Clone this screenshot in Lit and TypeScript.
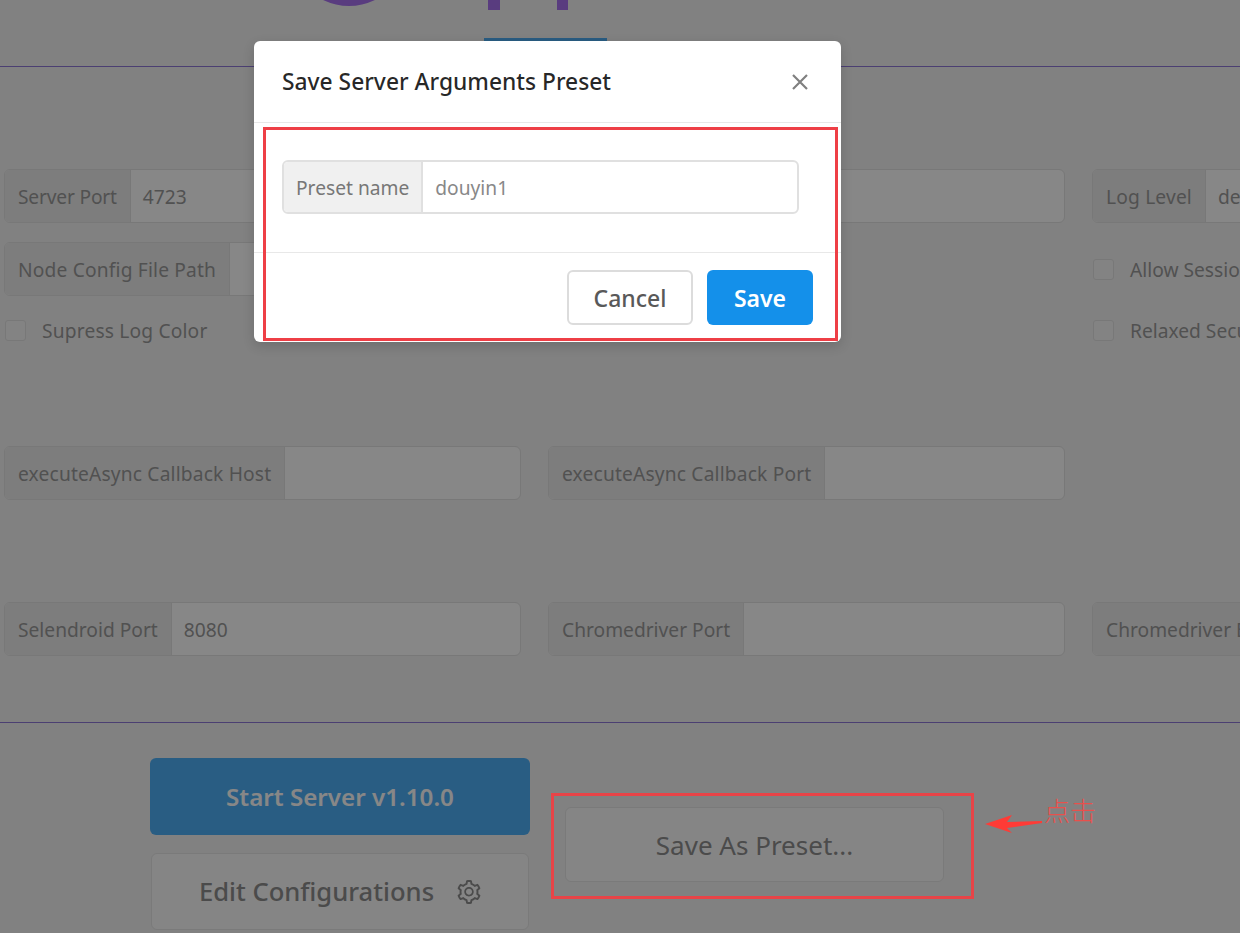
import { LitElement, html, css, nothing } from "lit";
import { customElement } from "lit/decorators.js";

const GEAR =
  "M924.8 625.7l-65.5-56c3.1-19 4.7-38.4 4.7-57.8s-1.6-38.8-4.7-57.8l65.5-56a32.03 32.03 0 0 0 9.3-35.2l-.9-2.6a443.74 443.74 0 0 0-79.7-137.9l-1.8-2.1a32.12 32.12 0 0 0-35.1-9.5l-81.3 28.9c-30-24.6-63.5-44-99.7-57.6l-15.7-85a32.05 32.05 0 0 0-25.8-25.7l-2.7-.5c-52.1-9.4-106.9-9.4-159 0l-2.7.5a32.05 32.05 0 0 0-25.8 25.7l-15.8 85.4a351.86 351.86 0 0 0-99 57.4l-81.9-29.1a32 32 0 0 0-35.1 9.5l-1.8 2.1a446.02 446.02 0 0 0-79.7 137.9l-.9 2.6c-4.5 12.5-.8 26.5 9.3 35.2l66.3 56.6c-3.1 18.8-4.6 38-4.6 57.1 0 19.2 1.5 38.4 4.6 57.1L99 625.5a32.03 32.03 0 0 0-9.3 35.2l.9 2.6c18.1 50.4 44.9 96.9 79.7 137.9l1.8 2.1a32.12 32.12 0 0 0 35.1 9.5l81.9-29.1c29.8 24.5 63.1 43.9 99 57.4l15.8 85.4a32.05 32.05 0 0 0 25.8 25.7l2.7.5a449.4 449.4 0 0 0 159 0l2.7-.5a32.05 32.05 0 0 0 25.8-25.7l15.7-85a350 350 0 0 0 99.7-57.6l81.3 28.9a32 32 0 0 0 35.1-9.5l1.8-2.1c34.8-41.1 61.6-87.5 79.7-137.9l.9-2.6c4.5-12.3.8-26.3-9.3-35zM788.3 465.9c2.5 15.1 3.8 30.6 3.8 46.1s-1.3 31-3.8 46.1l-6.6 40.1 74.7 63.9a370.03 370.03 0 0 1-42.6 73.6L721 702.8l-31.4 25.8c-23.9 19.6-50.5 35-79.3 45.8l-38.1 14.3-17.9 97a377.5 377.5 0 0 1-85 0l-17.9-97.2-37.8-14.5c-28.5-10.8-55-26.2-78.7-45.7l-31.4-25.9-93.4 33.2c-17-22.9-31.2-47.6-42.6-73.6l75.5-64.5-6.5-40c-2.4-14.9-3.7-30.3-3.7-45.5 0-15.3 1.2-30.6 3.7-45.5l6.5-40-75.5-64.5c11.3-26.1 25.6-50.7 42.6-73.6l93.4 33.2 31.4-25.9c23.7-19.5 50.2-34.9 78.7-45.7l37.9-14.3 17.9-97.2c28.1-3.2 56.8-3.2 85 0l17.9 97 38.1 14.3c28.7 10.8 55.4 26.2 79.3 45.8l31.4 25.8 92.8-32.9c17 22.9 31.2 47.6 42.6 73.6L781.8 426l6.5 39.9zM512 326c-97.2 0-176 78.8-176 176s78.8 176 176 176 176-78.8 176-176-78.8-176-176-176zm79.2 255.2A111.6 111.6 0 0 1 512 614c-29.9 0-58-11.7-79.2-32.8A111.6 111.6 0 0 1 400 502c0-29.9 11.7-58 32.8-79.2C454 401.6 482.1 390 512 390c29.9 0 58 11.6 79.2 32.8A111.6 111.6 0 0 1 624 502c0 29.9-11.7 58-32.8 79.2z";

@customElement("app-root")
export class AppRoot extends LitElement {
  static styles = css`
    :host {
      display: block;
      position: relative;
      width: 1240px;
      height: 933px;
      overflow: hidden;
      background: #f4f4f4;
      color: #9a9a9a;
      font-family: "Noto Sans", "Open Sans", sans-serif;
      font-size: 19.2px;
    }
    .head {
      position: relative;
      height: 66px;
      border-bottom: 1px solid #8f78d8;
    }
    .logo {
      position: absolute;
      left: 318px;
      top: 0;
    }
    .tab {
      position: absolute;
      left: 484px;
      top: 38px;
      width: 123px;
      height: 3px;
      background: #4faef5;
    }
    .form {
      display: grid;
      grid-template-columns: repeat(3, 517px);
      column-gap: 27px;
      padding-left: 4px;
    }
    .s1 {
      padding-top: 102px;
      row-gap: 19px;
    }
    .s2 {
      padding-top: 104px;
    }
    .s3 {
      padding-top: 102px;
    }
    .group {
      display: flex;
      height: 54px;
      box-sizing: border-box;
      border: 1px solid #e2e2e2;
      border-radius: 6px;
      background: #fff;
      overflow: hidden;
    }
    .addon {
      display: flex;
      align-items: center;
      padding: 0 13px;
      background: #ececec;
      border-right: 1px solid #e2e2e2;
      white-space: nowrap;
    }
    .wide {
      letter-spacing: 0.17px;
    }
    .tight {
      letter-spacing: -0.18px;
    }
    .value {
      flex: 1;
      display: flex;
      align-items: center;
      padding-left: 12px;
      white-space: nowrap;
      overflow: hidden;
    }
    .blank {
      height: 54px;
    }
    .check {
      display: flex;
      align-items: center;
      gap: 16px;
      height: 54px;
      padding-left: 1px;
      white-space: nowrap;
    }
    .check.short {
      height: 24px;
      margin-top: 3px;
    }
    .box {
      width: 21px;
      height: 21px;
      box-sizing: border-box;
      flex: none;
      border: 1px solid #e2e2e2;
      border-radius: 3px;
      background: #f8f8f8;
    }
    .foot {
      margin-top: 66px;
      border-top: 1px solid #8f78d8;
      padding: 35px 0 0 150px;
      display: flex;
      align-items: flex-start;
      gap: 35px;
    }
    .stack {
      display: flex;
      flex-direction: column;
      gap: 18px;
      width: 380px;
      align-items: center;
    }
    .btn {
      display: flex;
      align-items: center;
      justify-content: center;
      box-sizing: border-box;
      border-radius: 6px;
      font-size: 25px;
      font-weight: 500;
      white-space: nowrap;
    }
    .start {
      width: 380px;
      height: 77px;
      background: #4fb0f8;
      color: #fff;
      font-size: 24.2px;
      font-weight: 600;
    }
    .edit {
      width: 378px;
      height: 77px;
      gap: 23px;
      background: #fbfbfb;
      border: 1px solid #e6e6e6;
      font-size: 25.6px;
      color: #8e8e8e;
    }
    .edit svg {
      width: 24px;
      height: 24px;
      fill: currentColor;
    }
    .preset {
      width: 379px;
      height: 75px;
      margin-top: 49px;
      background: #fbfbfb;
      border: 1px solid #e6e6e6;
      font-size: 26px;
      font-weight: 400;
      color: #8e8e8e;
    }
    .scrim {
      position: absolute;
      inset: 0;
      background: rgba(0, 0, 0, 0.47);
    }
    .mark {
      position: absolute;
      left: 551px;
      top: 793px;
      width: 423px;
      height: 106px;
      box-sizing: border-box;
      border: 3px solid #e84448;
    }
    .note {
      position: absolute;
      left: 1044px;
      top: 791px;
      font-family: "Noto Sans CJK SC", sans-serif;
      font-weight: 300;
      font-size: 26px;
      color: #e8504c;
    }
    .arrow {
      position: absolute;
      left: 984px;
      top: 812px;
    }
    .modal {
      position: absolute;
      left: 254px;
      top: 41px;
      width: 587px;
      height: 301px;
      background: #fff;
      border-radius: 6px;
      display: flex;
      flex-direction: column;
      color: #777;
      box-shadow: 0 4px 12px rgba(0, 0, 0, 0.15);
    }
    .m-head {
      display: flex;
      align-items: center;
      justify-content: space-between;
      height: 82px;
      box-sizing: border-box;
      padding: 0 32px 0 28px;
      border-bottom: 1px solid #e8e8e8;
      font-size: 22.8px;
      font-weight: 500;
      color: rgba(0, 0, 0, 0.85);
    }
    .m-head svg {
      width: 18px;
      height: 18px;
      stroke: #808080;
      stroke-width: 2.2;
    }
    .m-body {
      height: 130px;
      box-sizing: border-box;
      padding: 37px 42px 0 28px;
      border-bottom: 1px solid #e8e8e8;
    }
    .m-body .group {
      height: 54px;
      background: #fff;
      border: 2px solid #e0e0e0;
    }
    .m-body .addon {
      background: #f0f0f0;
      border-right: 2px solid #e0e0e0;
      padding: 0 12px;
    }
    .m-body .value {
      color: #888;
    }
    .m-foot {
      display: flex;
      justify-content: flex-end;
      gap: 14px;
      padding: 17px 28px 0 0;
    }
    .m-btn {
      height: 55px;
      font-size: 23px;
    }
    .cancel {
      width: 126px;
      background: #fff;
      border: 2px solid #dcdcdc;
      color: #595959;
    }
    .save {
      width: 106px;
      background: #1490ea;
      color: #fff;
      font-weight: 600;
    }
    .redbox {
      position: absolute;
      left: 9px;
      top: 86px;
      width: 575px;
      height: 214px;
      box-sizing: border-box;
      border: 3px solid #ee3f46;
      pointer-events: none;
    }
  `;

  private field(label: string, value = "", fit = "") {
    return html`<div class="group">
      <span class="addon ${fit}">${label}</span><span class="value">${value || nothing}</span>
    </div>`;
  }

  private check(label: string, short = false, fit = "") {
    return html`<div class="check ${short ? "short" : ""}">
      <span class="box"></span><span class="${fit}">${label}</span>
    </div>`;
  }

  render() {
    return html`
      <div class="head">
        <svg class="logo" width="260" height="12" viewBox="0 0 260 12" fill="#a872f0">
          <path d="M5 0 Q 31 12 57 0 Z" />
          <rect x="170" y="0" width="12" height="10" />
          <rect x="239" y="0" width="11" height="10" />
        </svg>
        <div class="tab"></div>
      </div>

      <div class="form s1">
        ${this.field("Server Port", "4723", "tight")} ${this.field("Server Address", "0.0.0.0")}
        ${this.field("Log Level", "debug", "wide")} ${this.field("Node Config File Path", "", "wide")}
        <div class="blank"></div>
        ${this.check("Allow Session Override")} ${this.check("Supress Log Color", true, "wide")}
        <div></div>
        ${this.check("Relaxed Security", true)}
      </div>

      <div class="form s2">
        ${this.field("executeAsync Callback Host", "", "wide")}
        ${this.field("executeAsync Callback Port", "", "wide")}
      </div>

      <div class="form s3">
        ${this.field("Selendroid Port", "8080")} ${this.field("Chromedriver Port")}
        ${this.field("Chromedriver Binary")}
      </div>

      <div class="foot">
        <div class="stack">
          <div class="btn start">Start Server v1.10.0</div>
          <div class="btn edit">
            <span>Edit Configurations</span>
            <svg viewBox="64 64 896 896"><path d="${GEAR}" /></svg>
          </div>
        </div>
        <div class="btn preset">Save As Preset...</div>
      </div>

      <div class="scrim"></div>

      <div class="mark"></div>
      <div class="note">点击</div>
      <svg class="arrow" width="60" height="24" viewBox="0 0 60 24" fill="#ff3b36">
        <path d="M1 12 L28 3 L23 10 L58 9 L58 11 L23 16 L28 21 Z" />
      </svg>

      <div class="modal">
        <div class="m-head">
          <span>Save Server Arguments Preset</span>
          <svg viewBox="0 0 18 18"><path d="M2 2 L16 16 M16 2 L2 16" /></svg>
        </div>
        <div class="m-body">${this.field("Preset name", "douyin1")}</div>
        <div class="m-foot">
          <div class="btn m-btn cancel">Cancel</div>
          <div class="btn m-btn save">Save</div>
        </div>
        <div class="redbox"></div>
      </div>
    `;
  }
}
